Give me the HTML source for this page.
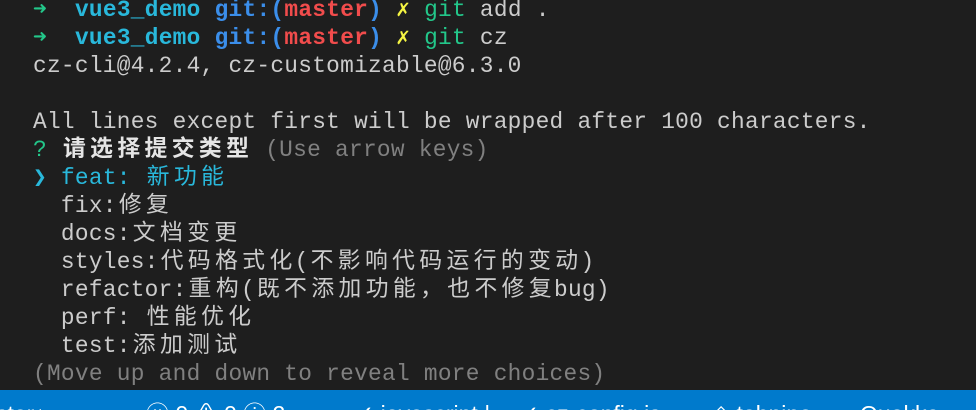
<!DOCTYPE html>
<html><head><meta charset="utf-8"><style>
html,body{margin:0;padding:0;width:976px;height:410px;overflow:hidden;background:#1e1e1e}
#t{position:absolute;left:33px;top:-4px;font-family:"Liberation Mono","Noto Sans CJK SC",monospace;font-size:22.8px;letter-spacing:0.28px;line-height:28px;color:#cccccc;white-space:pre}
.g{color:#23c78a}.c{color:#29b8db}.b{color:#3b8eea}.r{color:#f14c4c}.y{color:#f5f543}.d{color:#808080}.w{color:#e5e5e5;font-weight:bold}
.k{display:inline-block;width:27.2px;text-align:center}
#s{position:absolute;left:0;top:390px;width:976px;height:20px;background:#007acc;color:#fff;font-family:"Liberation Sans",sans-serif;font-size:23px;white-space:pre;overflow:hidden}
#s span{position:absolute;top:11px;line-height:26px}
</style></head><body>
<div id="t"><span class="g">➜</span>  <span class="c"><b>vue3_demo</b></span> <b class="b">git:(</b><b class="r">master</b><b class="b">)</b> <span class="y">✗</span> <span class="g">git</span> add .
<span class="g">➜</span>  <span class="c"><b>vue3_demo</b></span> <b class="b">git:(</b><b class="r">master</b><b class="b">)</b> <span class="y">✗</span> <span class="g">git</span> cz
cz-cli@4.2.4, cz-customizable@6.3.0

All lines except first will be wrapped after 100 characters.
<span class="g">?</span> <span class="w"><span class="k">请</span><span class="k">选</span><span class="k">择</span><span class="k">提</span><span class="k">交</span><span class="k">类</span><span class="k">型</span></span> <span class="d">(Use arrow keys)</span>
<span class="c">❯ feat: <span class="k">新</span><span class="k">功</span><span class="k">能</span></span>
  fix:<span class="k">修</span><span class="k">复</span>
  docs:<span class="k">文</span><span class="k">档</span><span class="k">变</span><span class="k">更</span>
  styles:<span class="k">代</span><span class="k">码</span><span class="k">格</span><span class="k">式</span><span class="k">化</span>(<span class="k">不</span><span class="k">影</span><span class="k">响</span><span class="k">代</span><span class="k">码</span><span class="k">运</span><span class="k">行</span><span class="k">的</span><span class="k">变</span><span class="k">动</span>)
  refactor:<span class="k">重</span><span class="k">构</span>(<span class="k">既</span><span class="k">不</span><span class="k">添</span><span class="k">加</span><span class="k">功</span><span class="k">能</span><span class="k">，</span><span class="k">也</span><span class="k">不</span><span class="k">修</span><span class="k">复</span>bug)
  perf: <span class="k">性</span><span class="k">能</span><span class="k">优</span><span class="k">化</span>
  test:<span class="k">添</span><span class="k">加</span><span class="k">测</span><span class="k">试</span>
<span class="d">(Move up and down to reveal more choices)</span></div>
<div id="s"><span style="left:-4px">ster↓</span><span style="left:90px">☁</span><span style="left:146px">ⓧ 0 ⚠ 0 ⓘ 2</span><span style="left:355px">✓ javascript |</span><span style="left:520px">✓ cz-config.js</span><span style="left:712px">⟐ tabnine</span><span style="left:860px">Quokka</span></div>
</body></html>
